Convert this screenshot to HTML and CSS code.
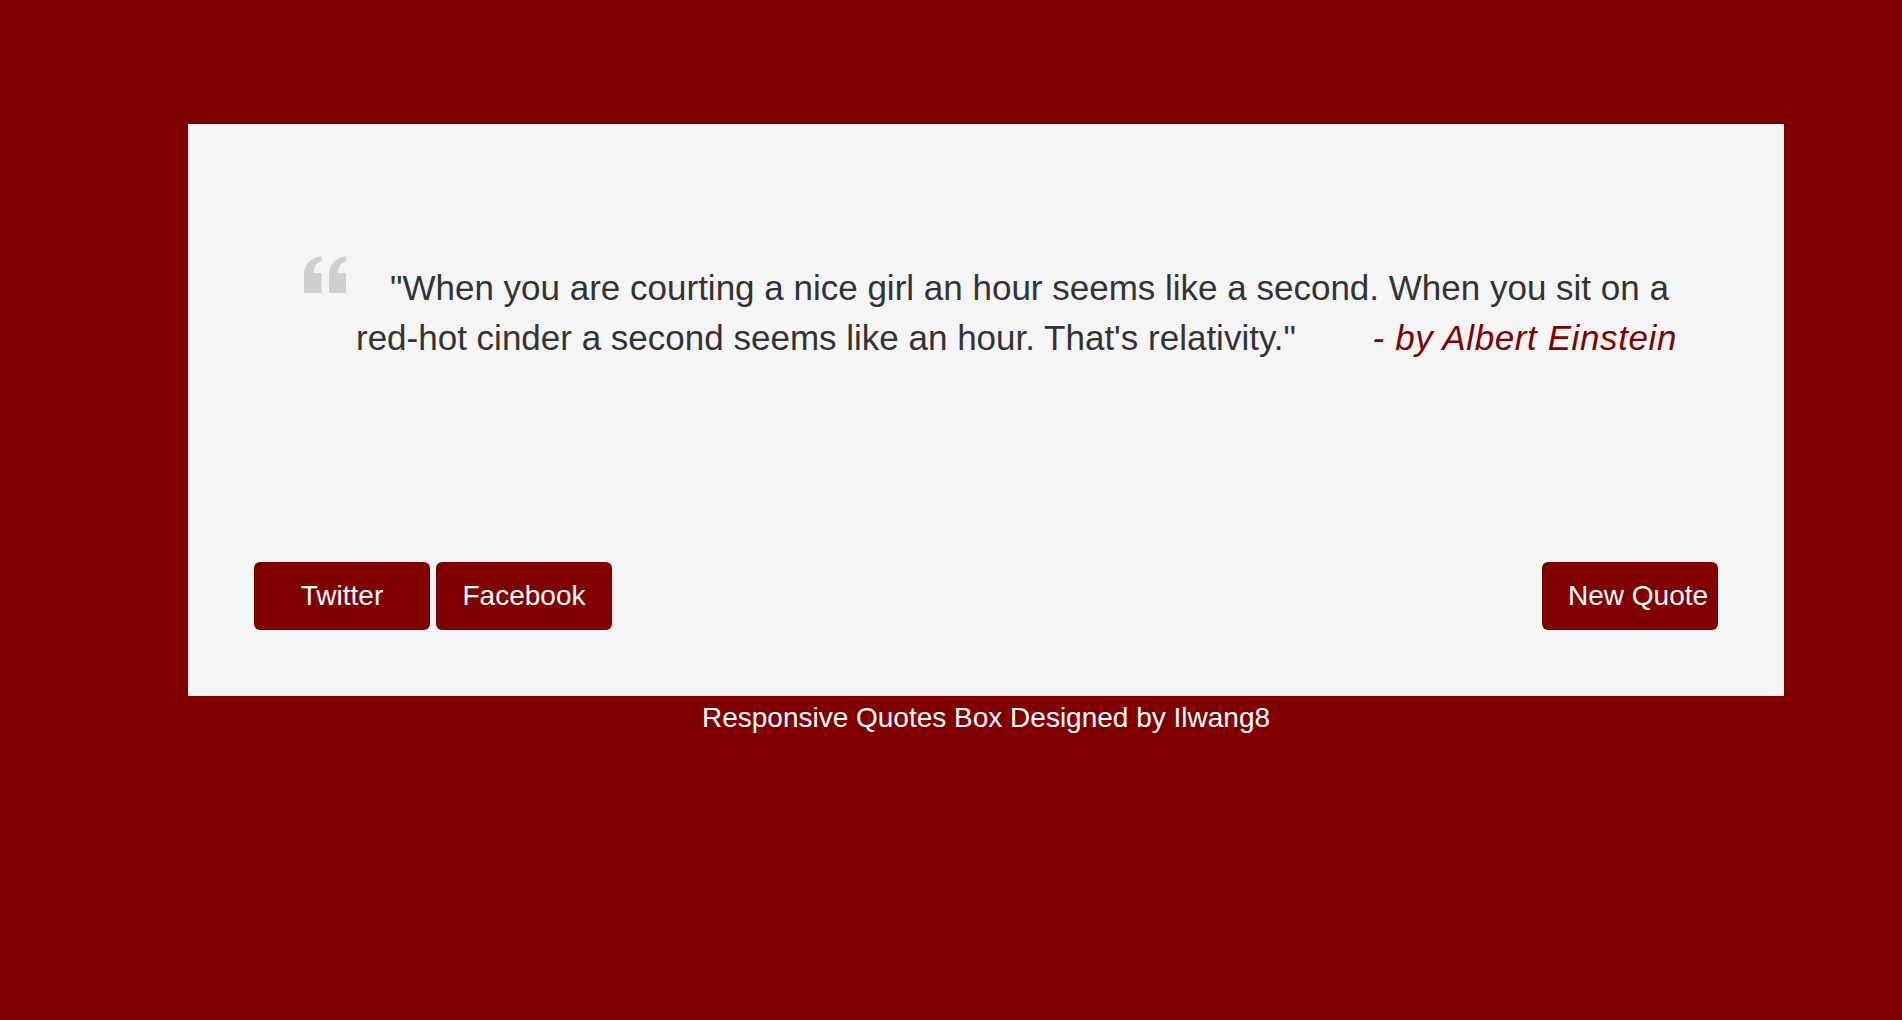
FILE: index.html
```html
<!DOCTYPE html>
<html lang="en">
<head>
<meta charset="utf-8">
<title>Random Quote Machine</title>
<link rel="stylesheet" href="styles.css">
</head>
<body>
<div class="wrapper">
  <div class="quote-box">
    <div class="quote-text"><span class="quote-icon"><svg width="42" height="37" viewBox="0 0 42 37"><path d="M0 37 L0 19 C0 9 6 2 17.5 0 L17.5 5 C12 7 10 11 9.5 17 L17.5 17 L17.5 37 Z" fill="#cfcfcf"/><path d="M25 37 L25 19 C25 9 31 2 42 0 L42 5 C36.5 7 34.5 11 34 17 L42 17 L42 37 Z" fill="#cfcfcf"/></svg></span>"When you are courting a nice girl an hour seems like a second. When you sit on a red-hot cinder a second seems like an hour. That's relativity."<span class="author">- by Albert Einstein</span></div>
    <div class="buttons">
      <button class="btn">Twitter</button>
      <button class="btn">Facebook</button>
      <button class="btn btn-new">New Quote</button>
    </div>
  </div>
  <div class="footer">Responsive Quotes Box Designed by Ilwang8</div>
</div>
</body>
</html>
```
FILE: styles.css
```css
html, body {
  margin: 0;
  padding: 0;
}
body {
  background: #800000;
  font-family: "Liberation Sans", Arial, Helvetica, sans-serif;
  color: #333;
}
.wrapper {
  width: 1596px;
  margin: 124px 0 0 188px;
}
.quote-box {
  background: #f5f5f5;
  padding: 139px 66px 66px;
}
.quote-text {
  margin: 0 41px 0 102px;
  font-size: 35px;
  line-height: 50px;
  color: #333;
}
.quote-icon {
  display: inline-block;
  margin-left: -52px;
  margin-right: 44px;
  margin-top: -16px;
  vertical-align: 7px;
  line-height: 0;
}
.quote-icon svg {
  display: block;
}
.author {
  float: right;
  font-style: italic;
  color: #800000;
  letter-spacing: 0.6px;
}
.quote-text::after {
  content: "";
  display: block;
  clear: both;
}
.buttons {
  display: flex;
  gap: 6px;
  margin-top: 199px;
}
.btn {
  width: 176px;
  height: 68px;
  border: none;
  border-radius: 6px;
  background: #800000;
  color: #fff;
  font-family: "Liberation Sans", Arial, Helvetica, sans-serif;
  font-size: 28px;
  padding: 0;
  text-align: center;
}
.btn-new {
  margin-left: auto;
  text-align: left;
  padding-left: 26px;
}
.footer {
  text-align: center;
  color: #fff;
  font-size: 28px;
  line-height: 40px;
  padding-top: 2px;
}
```
